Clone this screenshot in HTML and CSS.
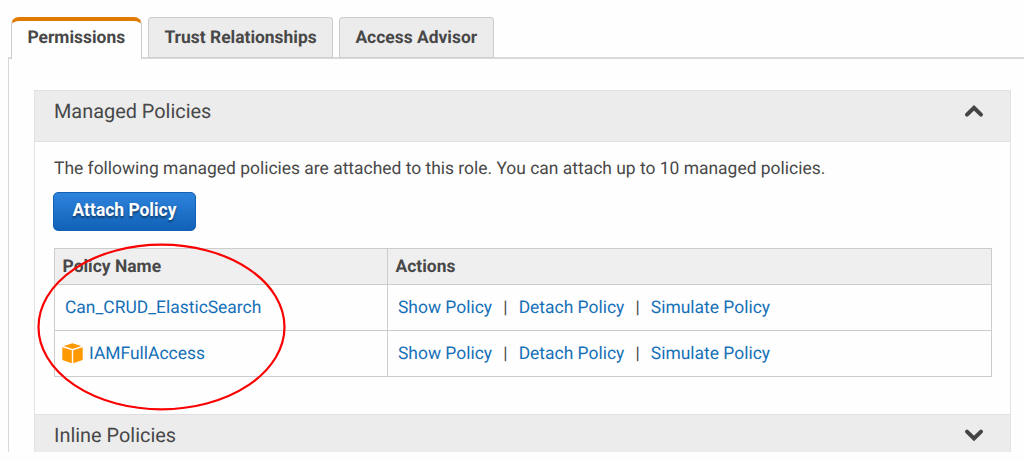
FILE: index.html
```html
<!DOCTYPE html>
<html lang="en">
<head>
<meta charset="utf-8">
<title>Role permissions</title>
<link rel="stylesheet" href="styles.css">
</head>
<body>
<div class="page">
  <nav class="tabs">
    <a class="tab tab-active">Permissions</a>
    <a class="tab tab-trust">Trust Relationships</a>
    <a class="tab tab-advisor">Access Advisor</a>
  </nav>
  <main class="panel">
    <section class="accordion">
      <header class="section-head">
        <h2 class="section-title">Managed Policies</h2>
        <svg class="chevron" viewBox="0 0 20 14" width="20" height="14"><path d="M3 10.6 L10 3.8 L17 10.6"/></svg>
      </header>
      <div class="section-body">
        <p class="intro">The following managed policies are attached to this role. You can attach up to 10 managed policies.</p>
        <button class="attach">Attach Policy</button>
        <div class="grid">
          <div class="cell head">Policy Name</div>
          <div class="cell head">Actions</div>
          <div class="cell name"><a class="link">Can_CRUD_ElasticSearch</a></div>
          <div class="cell actions"><a class="link">Show Policy</a><span class="sep">|</span><a class="link">Detach Policy</a><span class="sep">|</span><a class="link">Simulate Policy</a></div>
          <div class="cell name managed">
            <svg class="cube" viewBox="0 0 21 21" width="21" height="21">
              <path d="M10.5 0.2 L19.3 3.1 L10.5 6 L1.7 3.1 Z"/>
              <path d="M0.3 4.2 L9.8 7.3 V20.3 L0.3 17 Z"/>
              <path d="M20.7 4.2 L11.2 7.3 V20.3 L20.7 17 Z"/>
            </svg>
            <a class="link">IAMFullAccess</a>
          </div>
          <div class="cell actions"><a class="link">Show Policy</a><span class="sep">|</span><a class="link">Detach Policy</a><span class="sep">|</span><a class="link">Simulate Policy</a></div>
        </div>
      </div>
      <header class="section-head section-inline">
        <h2 class="section-title">Inline Policies</h2>
        <svg class="chevron" viewBox="0 0 20 14" width="20" height="14"><path d="M3 3.6 L10 10.4 L17 3.6"/></svg>
      </header>
    </section>
  </main>
  <svg class="annotation" viewBox="0 0 250 170" width="250" height="170"><ellipse cx="125.5" cy="85" rx="123" ry="82.3"/></svg>
</div>
</body>
</html>
```
FILE: styles.css
```css
* { box-sizing: border-box; }
body { margin: 0; background: #fefefe; color: #484848; font: 17.45px/24px Roboto, sans-serif; text-rendering: geometricPrecision; }
.page { position: relative; height: 452px; padding: 17px 0 0 8px; overflow: hidden; }
.tabs { display: flex; gap: 6px; height: 41px; padding-left: 3px; position: relative; z-index: 1; }
.tab { height: 41px; border: 1px solid #ccc; border-bottom-color: #d0d0d0; border-radius: 4px 4px 0 0; background: #ececec; padding: 8px 0 0 15.4px; font-weight: 700; white-space: nowrap; }
.tab-active { width: 131px; height: 42px; border-top: 4px solid #e07b00; border-bottom: 0; border-radius: 8px 8px 0 0; background: #fefefe; padding-top: 5px; }
.tab-trust { width: 185px; }
.tab-advisor { width: 155px; }
.panel { margin-top: -1px; height: 410px; border: solid #d9d9d9; border-width: 2px 0 0 1px; padding: 31px 13px 0 25px; }
.accordion { border: 1px solid #e2e2e2; border-bottom: 0; height: 400px; }
.section-head { display: flex; justify-content: space-between; height: 51px; padding: 8px 26px 0 19px; background: #ececec; border-bottom: 1px solid #e0e0e0; }
.section-inline { border-top: 1px solid #e0e0e0; }
.section-title { margin: 0; font-size: 19.9px; font-weight: 400; line-height: 25px; }
.chevron { margin-top: 5px; fill: none; stroke: #444; stroke-width: 4; stroke-linecap: round; }
.section-body { height: 272px; padding: 15px 19px 0; }
.intro { margin: 0 0 11px; white-space: nowrap; }
.attach { display: block; width: 143px; height: 39px; margin: 0 0 17px -1px; padding: 0 0 3px; border: 1px solid #1460b2; border-radius: 5px; background: linear-gradient(#2e83dc, #1162b7); color: #fff; font: 700 17.45px/24px Roboto, sans-serif; text-shadow: 0 2px 2px rgba(0, 0, 0, .45); }
.grid { display: grid; grid-template-columns: 333px 604px; grid-template-rows: 36px 46px 46px; width: 938px; border: solid #ccc; border-width: 1px 0 0 1px; }
.cell { display: flex; align-items: center; border: solid #ccc; border-width: 0 1px 1px 0; padding: 0 0 0 8px; white-space: nowrap; }
.head { background: #efefef; font-weight: 700; padding-left: 7.5px; }
.name, .actions { padding-left: 10px; }
.managed { padding-left: 7px; gap: 6px; }
.cube { fill: #ff9900; }
.link { color: #1670b8; }
.sep { width: 26.6px; text-align: center; }
.annotation { position: absolute; left: 36px; top: 242px; z-index: 2; fill: none; stroke: #fa0000; stroke-width: 2.2; }
```
